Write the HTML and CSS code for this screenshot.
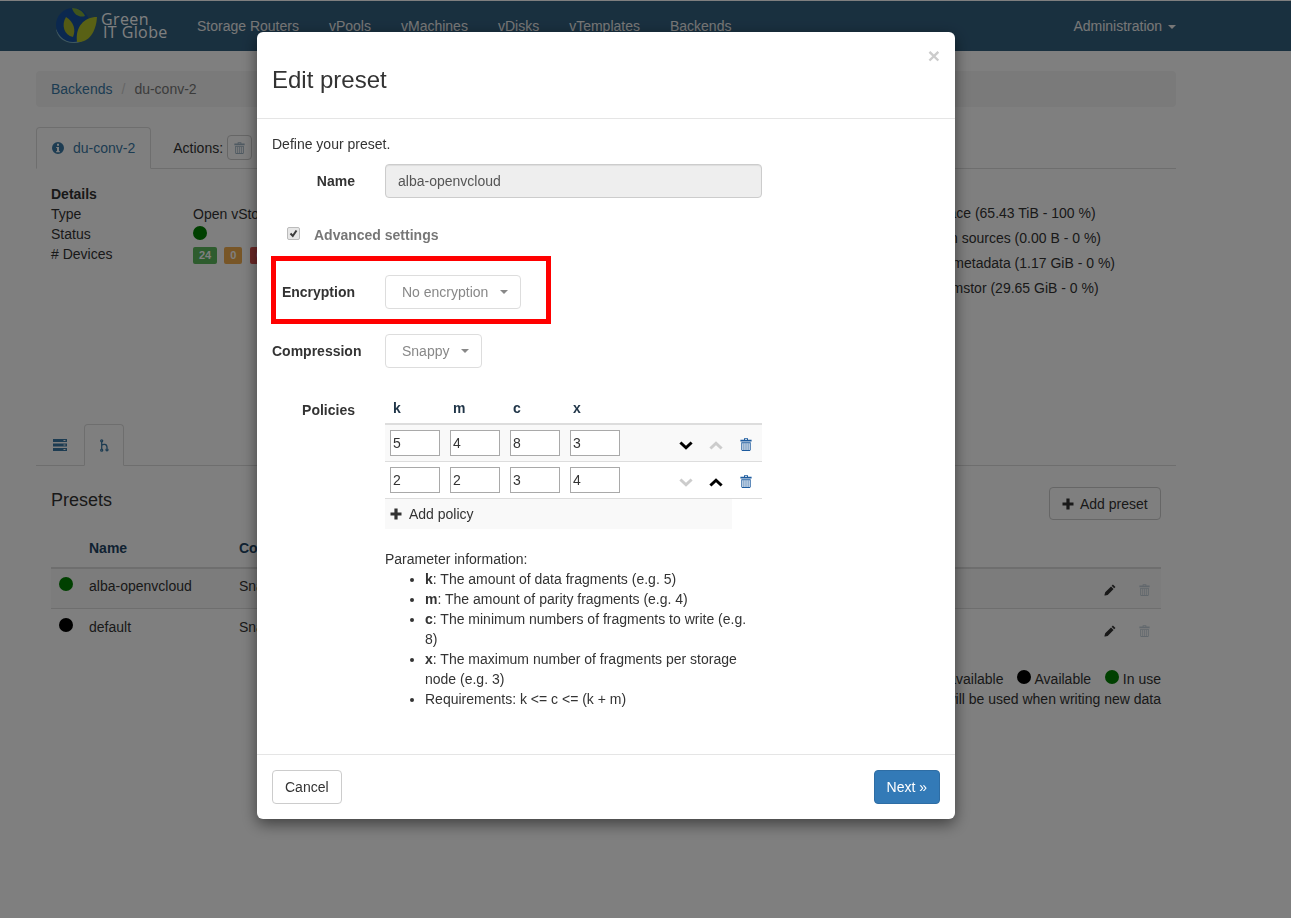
FILE: index.html
```html
<!DOCTYPE html>
<html lang="en">
<head>
<meta charset="utf-8">
<title>Edit preset</title>
<link rel="stylesheet" href="styles.css">
</head>
<body>
<svg class="defs" width="0" height="0" aria-hidden="true">
  <symbol id="i-trash" viewBox="0 0 12 13">
    <path d="M4 .3h4v1.400h3.600v1.800H.4V1.700H4zM5 1.100v.6h2v-.6z" fill-rule="evenodd"/>
    <path d="M1.300 4.200h9.400v7.900l-.9.9H2.200l-.9-.9zM2.300 5.200v6.800h7.400V5.200z" fill-rule="evenodd"/>
    <path d="M3.300 5.200h1.200v6.800H3.300zM5.400 5.200h1.200v6.800H5.400zM7.500 5.200h1.200v6.800H7.500z" opacity=".7"/>
  </symbol>
  <symbol id="i-plus" viewBox="0 0 12 12"><path d="M4.400.5h3.200v3.900h3.900v3.200H7.600v3.900H4.400V7.600H.5V4.400h3.900z"/></symbol>
  <symbol id="i-pencil" viewBox="0 0 14 14"><path d="M10.400.6l3 3-1.500 1.500-3-3zM8.200 2.800l3 3-6.900 6.900-3 .8-.8-.1.1-.8.8-3z"/></symbol>
  <symbol id="i-info" viewBox="0 0 12 12"><path fill-rule="evenodd" d="M6 0a6 6 0 1 1 0 12A6 6 0 0 1 6 0zM5 1.800v2h2v-2zM4.200 5v1.100H5v3H4.200v1.100h3.600V9.100H7V5z"/></symbol>
  <symbol id="i-list" viewBox="0 0 14 12"><path fill-rule="evenodd" d="M0 0h14v3H0zM10.500 1v1h2V1zM0 4.500h14v3H0zM10.500 5.500v1h2v-1zM0 9h14v3H0zM10.500 10v1h2v-1z"/></symbol>
  <symbol id="i-fork" viewBox="0 0 9 13"><g fill="none" stroke="currentColor" stroke-width="1.300"><circle cx="1.700" cy="1.800" r="1"/><circle cx="1.700" cy="11.200" r="1"/><circle cx="7" cy="10.800" r="1"/><path d="M1.700 3v7M1.700 6.500c1-1.500 5.300-2 5.300 1.800v1.300"/></g></symbol>
  <symbol id="i-down" viewBox="0 0 14 9"><path d="M1.400 1.500L7 6.800l5.600-5.300" fill="none" stroke="currentColor" stroke-width="3"/></symbol>
  <symbol id="i-up" viewBox="0 0 14 9"><path d="M1.400 7.500L7 2.200l5.600 5.300" fill="none" stroke="currentColor" stroke-width="3"/></symbol>
</svg>

<header class="topbar">
  <div class="topbar-inner">
    <a class="brand">
      <svg class="logo" width="44" height="38" viewBox="0 0 44 38" aria-hidden="true">
        <path d="M2 22c1 9 10 15 19 14 4 0 7-2 9-3-10 2-22-1-28-11z" fill="#7fb0bd"/>
        <circle cx="19" cy="18" r="17" fill="#17509e"/>
        <path d="M12 10C7 18 10 28 19 30c3-7 1-15-7-20z" fill="#a8b52a"/>
        <path d="M18 1c2 7 8 10 13 8-2-5-7-8-13-8z" fill="#7fa83a"/>
        <path d="M43 10C30 10 21 20 23 35c11 1 19-9 20-25z" fill="#b3c22a"/>
      </svg>
      <span class="brand-text"><span>Green</span><span>IT Globe</span></span>
    </a>
    <nav class="mainnav">
      <a>Storage Routers</a><a>vPools</a><a>vMachines</a><a>vDisks</a><a>vTemplates</a><a>Backends</a>
    </nav>
    <a class="admin">Administration <i class="caret"></i></a>
  </div>
</header>

<main class="page">
  <div class="crumbs"><a>Backends</a><span class="sep">/</span><span class="cur">du-conv-2</span></div>

  <div class="tabs top-tabs">
    <a class="tab active"><svg class="ic12 blue"><use href="#i-info"/></svg>du-conv-2</a>
    <div class="actions">Actions:<span class="act-btn"><svg class="ic-act"><use href="#i-trash"/></svg></span></div>
  </div>

  <section class="details">
    <div class="facts">
      <strong class="fact-title">Details</strong>
      <span>Type</span><span>Open vStorage Backend</span>
      <span>Status</span><span><i class="dot green"></i></span>
      <span># Devices</span>
      <span class="badges"><b class="badge b-green">24</b><b class="badge b-orange">0</b><b class="badge b-red">0</b></span>
    </div>
    <ul class="usage">
      <li>Free space (65.43 TiB - 100 %)</li>
      <li>Taken on sources (0.00 B - 0 %)</li>
      <li>Used in metadata (1.17 GiB - 0 %)</li>
      <li>Fast memstor (29.65 GiB - 0 %)</li>
    </ul>
  </section>

  <div class="tabs sub-tabs">
    <a class="subtab"><svg class="ic-list"><use href="#i-list"/></svg></a>
    <a class="subtab active"><svg class="ic-fork"><use href="#i-fork"/></svg></a>
  </div>

  <section class="presets">
    <div class="presets-head">
      <h3>Presets</h3>
      <a class="btn add-preset"><svg class="ic-plus"><use href="#i-plus"/></svg>Add preset</a>
    </div>
    <div class="ptable">
      <div class="prow phead"><span></span><span>Name</span><span>Compression</span></div>
      <div class="prow odd"><span><i class="dot green"></i></span><span>alba-openvcloud</span><span>Snappy</span>
        <span class="row-act"><svg class="ic-pen"><use href="#i-pencil"/></svg><svg class="ic-del"><use href="#i-trash"/></svg></span></div>
      <div class="prow last"><span><i class="dot black"></i></span><span>default</span><span>Snappy</span>
        <span class="row-act"><svg class="ic-pen"><use href="#i-pencil"/></svg><svg class="ic-del"><use href="#i-trash"/></svg></span></div>
    </div>
    <div class="legend">
      <p>Legend: <i class="dot grey"></i> Unavailable <i class="dot black gapl"></i> Available <i class="dot green gapl"></i> In use</p>
      <p>Presets that are in use will be used when writing new data</p>
    </div>
  </section>
</main>

<div class="backdrop">
  <div class="modal">
    <div class="modal-head">
      <h4>Edit preset</h4>
      <span class="close">×</span>
    </div>
    <div class="modal-body">
      <p class="intro">Define your preset.</p>
      <div class="frow">
        <label class="flabel">Name</label>
        <input class="name-input" type="text" value="alba-openvcloud" disabled>
      </div>
      <div class="frow adv">
        <span class="adv-check"><svg width="11" height="11" viewBox="0 0 11 11"><path d="M2.500 5.500l2.300 2.500 3.700-5.500" fill="none" stroke="#3a3a3a" stroke-width="2"/></svg></span>
        <span class="adv-label">Advanced settings</span>
      </div>
      <div class="frow enc">
        <label class="flabel">Encryption</label>
        <span class="select sel-enc">No encryption<i class="caret"></i></span>
        <div class="highlight"></div>
      </div>
      <div class="frow comp">
        <label class="flabel">Compression</label>
        <span class="select sel-comp">Snappy<i class="caret"></i></span>
      </div>
      <div class="frow pol">
        <label class="flabel pol-label">Policies</label>
        <div class="pol-main">
          <div class="pol-head"><span>k</span><span>m</span><span>c</span><span>x</span></div>
          <div class="pol-row shade">
            <input type="text" value="5"><input type="text" value="4"><input type="text" value="8"><input type="text" value="3">
            <span class="pol-act"><svg class="chev on"><use href="#i-down"/></svg><svg class="chev off"><use href="#i-up"/></svg><svg class="tr"><use href="#i-trash"/></svg></span>
          </div>
          <div class="pol-row">
            <input type="text" value="2"><input type="text" value="2"><input type="text" value="3"><input type="text" value="4">
            <span class="pol-act"><svg class="chev off"><use href="#i-down"/></svg><svg class="chev on"><use href="#i-up"/></svg><svg class="tr"><use href="#i-trash"/></svg></span>
          </div>
          <div class="add-policy"><svg class="ic-plus"><use href="#i-plus"/></svg>Add policy</div>
          <p class="param-title">Parameter information:</p>
          <ul class="params">
            <li><b>k</b>: The amount of data fragments (e.g. 5)</li>
            <li><b>m</b>: The amount of parity fragments (e.g. 4)</li>
            <li><b>c</b>: The minimum numbers of fragments to write (e.g. 8)</li>
            <li><b>x</b>: The maximum number of fragments per storage node (e.g. 3)</li>
            <li>Requirements: k &lt;= c &lt;= (k + m)</li>
          </ul>
        </div>
      </div>
    </div>
    <div class="modal-foot">
      <a class="btn">Cancel</a>
      <a class="btn primary">Next »</a>
    </div>
  </div>
</div>
</body>
</html>
```
FILE: styles.css
```css
* { box-sizing: border-box; }
html, body { margin: 0; height: 918px; overflow: hidden; }
body { background: #fff; color: #333; font: 14px/20px "Liberation Sans", Arial, sans-serif; }
p, ul, h3, h4 { margin: 0; padding: 0; }
.defs { position: absolute; }
svg { fill: currentColor; display: block; }

/* top bar */
.topbar { height: 51px; border-top: 1px solid #fff; background: #33607f; }
.topbar-inner { margin-left: 36px; width: 1140px; height: 50px; display: flex; align-items: center; color: #eee; }
.brand { width: 146px; height: 50px; display: flex; align-items: center; padding-left: 19px; }
.logo { flex: none; margin-left: -1px; }
.brand-text { display: flex; flex-direction: column; font: 16px/13px "Open Sans", sans-serif; margin-left: 3px; color: #fff; letter-spacing: .4px; }
.brand-text span:last-child { margin-left: 2px; }
.mainnav { display: flex; flex: 1; }
.mainnav a { padding: 0 15px; }
.admin { white-space: nowrap; }
.caret { display: inline-block; width: 0; height: 0; border-top: 4px solid; border-left: 4px solid transparent; border-right: 4px solid transparent; vertical-align: middle; margin-left: 2px; }

/* page */
.page { margin-left: 36px; width: 1140px; }
.crumbs { margin-top: 20px; height: 36px; padding: 8px 15px; background: #f5f5f5; border-radius: 4px; }
.crumbs a { color: #3a79a5; }
.crumbs .sep { color: #ccc; padding: 0 9px; }
.crumbs .cur { color: #777; }
.tabs { display: flex; border-bottom: 1px solid #ddd; }
.top-tabs { margin-top: 20px; height: 42px; }
.tab { height: 42px; display: flex; align-items: center; gap: 9px; padding: 0 15px; color: #3a79a5; }
.tab.active { background: #fff; border: 1px solid #ddd; border-bottom-color: #fff; border-radius: 4px 4px 0 0; }
.ic12 { width: 12px; height: 12px; flex: none; }
.blue { color: #3a79a5; }
.actions { margin-left: 22px; display: flex; align-items: center; gap: 4px; height: 41px; }
.act-btn { width: 25px; height: 25px; border: 1px solid #ccc; border-radius: 4px; display: flex; align-items: center; justify-content: center; color: #9fb4c4; }
.ic-act { width: 11px; height: 12px; }

.details { height: 255px; padding: 15px 15px 0; display: flex; }
.facts { width: 850px; display: grid; grid-template-columns: 142px 1fr; grid-auto-rows: 20px; align-content: start; }
.fact-title { grid-column: 1 / -1; }
.dot { display: inline-block; width: 14px; height: 14px; border-radius: 50%; vertical-align: -1px; }
.dot.green { background: #008000; }
.dot.black { background: #000; }
.dot.grey { background: #bbb; }
.badges { display: flex; gap: 7px; padding-top: 3px; }
.badge { height: 17px; min-width: 18px; padding: 0 6px; border-radius: 2px; color: #fff; font-size: 11px; line-height: 17px; text-align: center; }
.b-green { background: #5cb85c; }
.b-orange { background: #f0ad4e; }
.b-red { background: #d9534f; margin-left: 1px; }
.usage { list-style: none; margin-top: 17px; white-space: nowrap; line-height: 25px; }

.sub-tabs { height: 42px; }
.subtab { width: 48px; height: 42px; display: flex; align-items: center; justify-content: center; color: #3a79a5; }
.subtab.active { width: 40px; background: #fff; border: 1px solid #ddd; border-bottom-color: #fff; border-radius: 4px 4px 0 0; }
.ic-list { width: 14px; height: 12px; }
.ic-fork { width: 9px; height: 13px; }

.presets { padding: 21px 15px 0; }
.presets-head { display: flex; justify-content: space-between; height: 33px; }
.presets-head h3 { font-size: 18px; font-weight: 400; line-height: 26px; }
.btn { display: inline-flex; align-items: center; height: 34px; padding: 0 12px; border: 1px solid #ccc; border-radius: 4px; background: #fff; color: #333; white-space: nowrap; }
.add-preset { width: 112px; height: 33px; background: transparent; gap: 6px; }
.ptable { margin-top: 18px; }
.prow { display: grid; grid-template-columns: 38px 150px 1fr 70px; height: 40px; align-items: start; padding-top: 7px; border-bottom: 1px solid #ddd; }
.prow > span:first-child { padding: 1px 0 0 8px; display: flex; }
.phead { height: 31px; padding-top: 0; border-bottom: 2px solid #ddd; font-weight: 700; color: #1f4565; }
.prow.odd { background: #f9f9f9; }
.prow.last { border-bottom: 0; height: 41px; padding-top: 8px; }
.row-act { display: flex; justify-content: flex-end; gap: 23px; margin-top: 1px; padding-right: 11px; color: #333; height: 26px; align-items: center; }
.ic-pen { width: 12px; height: 12px; }
.ic-del { width: 11px; height: 12px; color: #9fb4c4; opacity: .6; }
.legend { margin-top: 19px; text-align: right; }
.legend .dot { vertical-align: 0; }
.gapl { margin-left: 10px; }

/* modal */
.backdrop { position: fixed; inset: 0; background: rgba(0, 0, 0, .5); }
.modal { margin: 32px 0 0 257px; width: 698px; height: 787px; background: #fff; border-radius: 6px; box-shadow: 0 5px 15px rgba(0, 0, 0, .5); display: flex; flex-direction: column; position: relative; }
.modal-head { height: 87px; padding: 35px 15px 0; border-bottom: 1px solid #e5e5e5; flex: none; }
.modal-head h4 { font-size: 24px; font-weight: 400; line-height: 26px; }
.close { position: absolute; top: 12px; right: 15px; font-size: 21px; font-weight: 700; line-height: 24px; color: #ccc; }
.modal-body { flex: 1; padding: 15px 15px 0; }
.intro { height: 30px; }
.frow { display: flex; gap: 30px; align-items: center; }
.flabel { width: 83px; flex: none; font-weight: 700; text-align: right; white-space: nowrap; }
.name-input { width: 377px; height: 34px; padding: 0 12px; border: 1px solid #ccc; border-radius: 4px; background: #eee; color: #555; font: inherit; box-shadow: inset 0 1px 1px rgba(0, 0, 0, .075); }
.adv { margin-top: 27px; height: 20px; gap: 0; }
.adv-check { margin: 0 0 3px 15px; width: 13px; height: 13px; flex: none; display: flex; align-items: center; justify-content: center; background: #e6e6e6; border: 1px solid #bbb; border-radius: 2px; }
.adv-label { margin-left: 14px; font-weight: 700; color: #777; }
.enc { margin-top: 30px; position: relative; }
.comp { margin-top: 25px; }
.comp .flabel { text-align: left; }
.select { height: 34px; padding: 0 12px 0 16px; border: 1px solid #ddd; border-radius: 4px; display: flex; align-items: center; color: #888; }
.sel-enc { width: 136px; }
.sel-comp { width: 97px; }
.select .caret { margin-left: auto; color: #888; }
.highlight { position: absolute; left: -1px; top: -19px; width: 280px; height: 68px; border: 5px solid #f00; }
.pol { margin-top: 30px; align-items: flex-start; }
.pol-label { margin-top: 2px; }
.pol-main { width: 377px; flex: none; }
.pol-head { display: flex; height: 27px; padding-left: 8px; font-weight: 700; color: #1f3447; border-bottom: 2px solid #ddd; }
.pol-head span { width: 60px; }
.pol-row { height: 37px; padding: 5px 0 0 5px; display: flex; gap: 10px; border-bottom: 1px solid #ddd; }
.pol-row.shade { background: #f9f9f9; }
.pol-row input { width: 50px; height: 26px; padding: 1px 2px; border: 1px solid #a9a9a9; background: #fff; color: #333; font: inherit; }
.pol-act { margin: 0 1px 0 auto; width: 90px; height: 26px; padding-top: 2px; display: grid; grid-template-columns: repeat(3, 30px); justify-items: center; align-items: center; }
.chev { width: 14px; height: 9px; margin-top: 2px; }
.chev.on { color: #000; }
.chev.off { color: #ccc; }
.tr { width: 12px; height: 13px; color: #1d5b9e; }
.add-policy { width: 347px; height: 30px; background: #f9f9f9; display: flex; align-items: center; padding-left: 5px; gap: 7px; }
.ic-plus { width: 12px; height: 12px; flex: none; }
.param-title { margin-top: 20px; }
.params { padding-left: 40px; }
.modal-foot { height: 65px; padding: 15px 15px 0; border-top: 1px solid #e5e5e5; display: flex; justify-content: space-between; flex: none; }
.primary { background: #337ab7; border-color: #2e6da4; color: #fff; }
```
